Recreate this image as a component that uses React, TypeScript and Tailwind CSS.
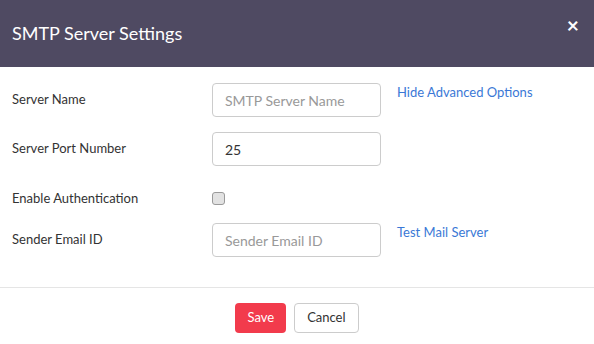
import React, { useState } from 'react'

const Row: React.FC<{ label: string; children: React.ReactNode; className?: string }> = ({ label, children, className }) => (
  <div className={`flex items-center ${className ?? ''}`}>
    <label className="w-[200px] shrink-0 text-[13px] text-[#333]">{label}</label>
    {children}
  </div>
)

const App: React.FC = () => {
  const [serverName, setServerName] = useState<string>('')
  const [port, setPort] = useState<string>('25')
  const [auth, setAuth] = useState<boolean>(false)
  const [sender, setSender] = useState<string>('')

  const inputCls =
    'w-[169px] h-[34px] px-3 border border-[#ccc] rounded-[4px] text-[14px] text-[#333] placeholder:text-[#999] outline-none'

  return (
    <div className="w-[594px] h-[344px] bg-white font-['Lato',sans-serif] overflow-hidden">
      {/* Header */}
      <div className="h-[67px] bg-[#4f4a62] flex items-center justify-between pl-3 pr-[15px]">
        <h4 className="text-[18px] text-white">SMTP Server Settings</h4>
        <button className="text-white text-[21px] font-bold leading-none -mt-[18px]">×</button>
      </div>

      {/* Body */}
      <div className="px-3 pt-4">
        <Row label="Server Name">
          <input
            className={inputCls}
            placeholder="SMTP Server Name"
            value={serverName}
            onChange={e => setServerName(e.target.value)}
          />
          <a href="#" className="self-start ml-4 text-[13px] text-[#3a78d6]">Hide Advanced Options</a>
        </Row>

        <Row label="Server Port Number" className="mt-[15px]">
          <input className={inputCls} value={port} onChange={e => setPort(e.target.value)} />
        </Row>

        <Row label="Enable Authentication" className="mt-[26px] h-[13px]">
          <input
            type="checkbox"
            checked={auth}
            onChange={e => setAuth(e.target.checked)}
            className="appearance-none w-[13px] h-[13px] rounded-[3px] border border-[#9a9a9a] bg-[#e2e2e2]"
          />
        </Row>

        <Row label="Sender Email ID" className="mt-[18px]">
          <input
            className={inputCls}
            placeholder="Sender Email ID"
            value={sender}
            onChange={e => setSender(e.target.value)}
          />
          <a href="#" className="self-start ml-4 text-[13px] text-[#3a78d6]">Test Mail Server</a>
        </Row>
      </div>

      {/* Footer */}
      <div className="mt-[30px] border-t border-[#e5e5e5] pt-[15px] flex justify-center gap-2">
        <button className="h-[30px] px-3 rounded-[4px] bg-[#f23b4c] text-white text-[13px]">Save</button>
        <button className="h-[30px] px-3 rounded-[4px] border border-[#ccc] bg-white text-[#333] text-[13px]">Cancel</button>
      </div>
    </div>
  )
}

export default App
